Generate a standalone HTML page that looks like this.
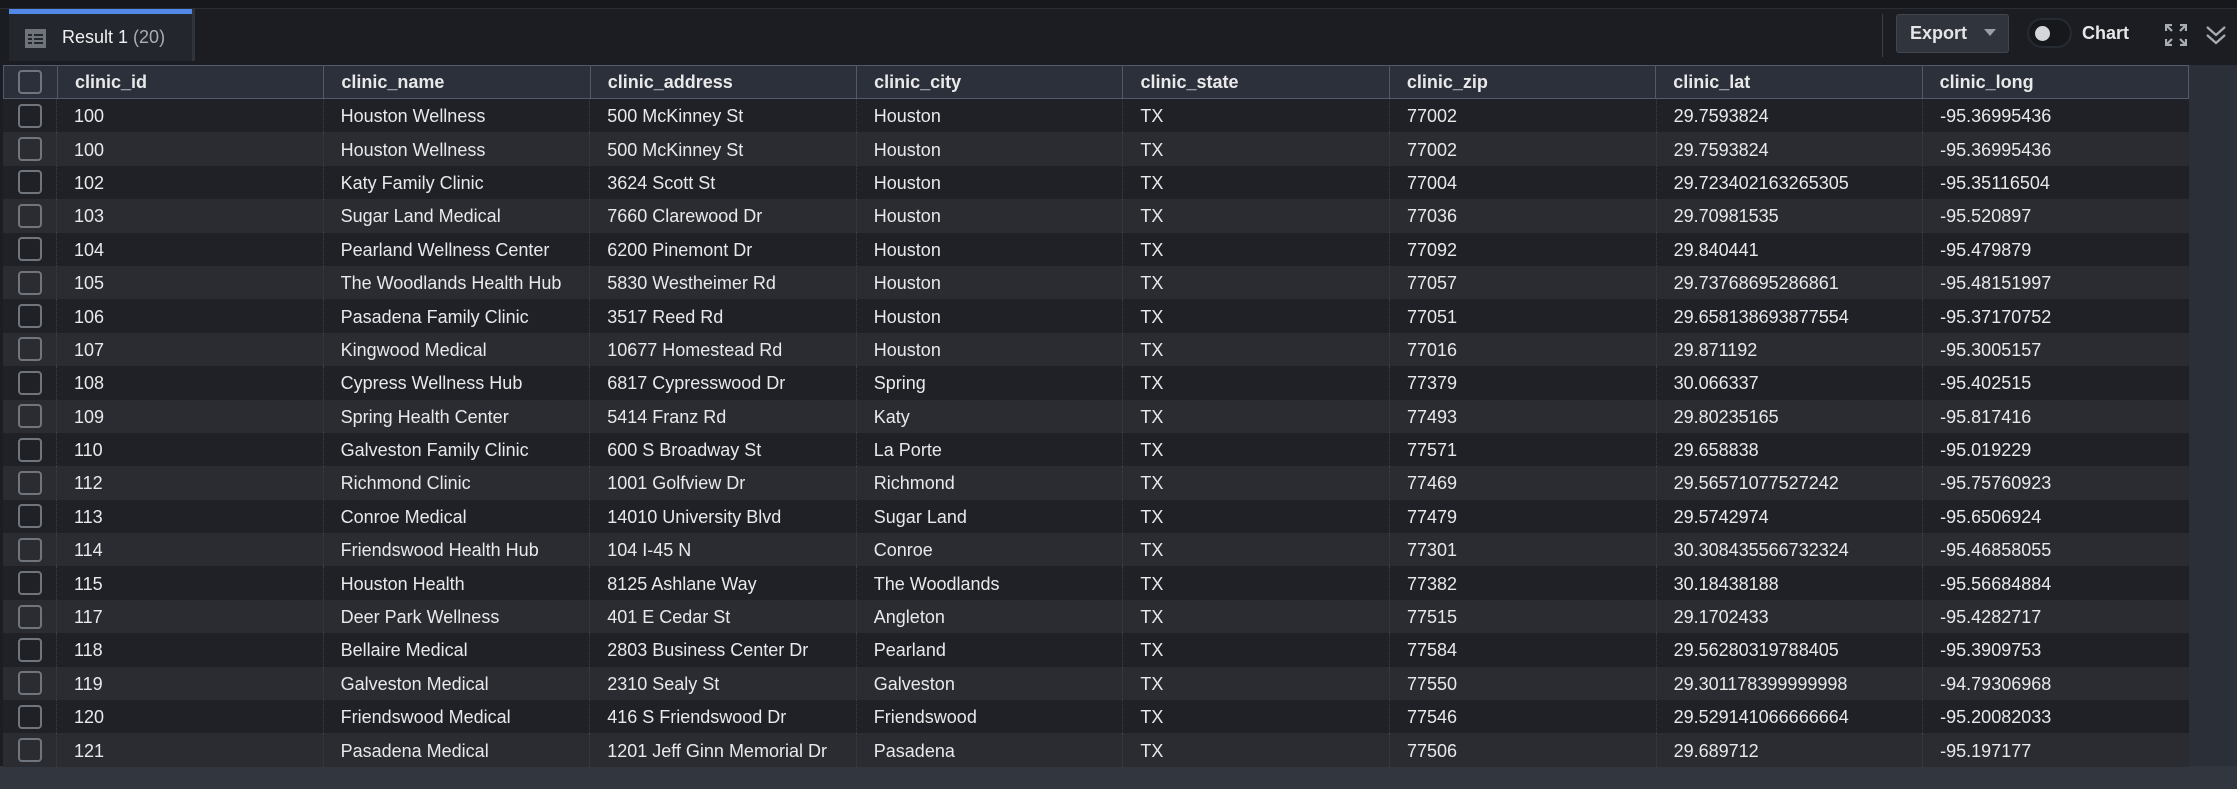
<!DOCTYPE html><html><head><style>
body{margin:0;width:2237px;height:789px;background:#1b1d22;font-family:"Liberation Sans",sans-serif;overflow:hidden;position:relative;color:#e9e9ea}
.top{position:absolute;left:0;top:0;width:2237px;height:8px;background:#16181c;border-bottom:1px solid #2a2d33}
.tab{position:absolute;left:9px;top:9px;width:183px;height:52px;background:#23262d;border-right:3px solid #2f333b}
.tab .bar{height:5px;background:#5288e6}
.tab .t{position:absolute;left:53px;top:18px;font-size:18px;color:#f0f0f0}
.tab .t span{color:#a9adb5}
.grid{position:absolute;left:3px;top:65px;width:2186px}
.hdr{display:flex;height:34px;background:#2b303a;border:1px solid #4f5b6b;box-sizing:border-box}
.row{display:flex;height:33.4px;align-items:center}
.row:nth-child(odd){background:#1f2127}
.row:nth-child(even){background:#2a2c32}
.c{width:266.6px;box-sizing:border-box;padding-left:17px;font-size:18px;height:100%;display:flex;align-items:center;border-left:1px dotted #3b3f47;white-space:nowrap;padding-top:2px}
.hdr .c{border-left:1px solid #4f5b6b;font-weight:bold;font-size:18px;padding-top:0}
.cb{width:53px;display:flex;align-items:center;justify-content:center;height:100%}
.cb i{display:block;width:20px;height:20px;border:2px solid #70757d;border-radius:4px}
.rest{position:absolute;left:2189px;top:65px;width:48px;height:701px;background:#2b2f37}
.bottom{position:absolute;left:0;top:766px;width:2237px;height:23px;background:#31363f}
</style></head><body>
<div class="top"></div>
<div class="tab"><div class="bar"></div>
<svg style="position:absolute;left:16px;top:20px" width="21" height="19" viewBox="0 0 21 19"><rect x="0" y="0" width="21" height="19" fill="#6f737a"/><g fill="#23262d"><rect x="3" y="5" width="4" height="2"/><rect x="9" y="5" width="9" height="2"/><rect x="3" y="9" width="4" height="2"/><rect x="9" y="9" width="9" height="2"/><rect x="3" y="13" width="4" height="2"/><rect x="9" y="13" width="9" height="2"/></g></svg>
<div class="t">Result 1 <span>(20)</span></div></div>
<div style="position:absolute;left:1882px;top:14px;width:1px;height:43px;background:#3a3e45"></div>
<div style="position:absolute;left:1896px;top:14px;width:113px;height:39px;background:#30343c;border:1px solid #41454d;box-sizing:border-box;border-radius:3px;font-size:18px;font-weight:bold;color:#e6e6e6;line-height:37px;padding-left:13px">Export <span style="display:inline-block;margin-left:12px;border:6px solid transparent;border-top:7px solid #9a9ea6;vertical-align:-3px"></span></div>
<div style="position:absolute;left:2027px;top:18px;width:45px;height:30px;border-radius:15px;background:#16181c;border:2px solid #252a33;box-sizing:border-box"><div style="position:absolute;left:6px;top:6px;width:15px;height:15px;border-radius:50%;background:#d4d6da"></div></div>
<div style="position:absolute;left:2082px;top:23px;font-size:18px;font-weight:bold;color:#e6e6e6">Chart</div>
<svg style="position:absolute;left:2165px;top:24px" width="22" height="22" viewBox="0 0 22 22" fill="none" stroke="#a8acb3" stroke-width="2.2"><path d="M1 7V1h6M1 1l6 6M15 1h6v6M21 1l-6 6M1 15v6h6M1 21l6-6M21 15v6h-6M21 21l-6-6"/></svg>
<svg style="position:absolute;left:2205px;top:24px" width="22" height="22" viewBox="0 0 22 22" fill="none" stroke="#a8acb3" stroke-width="2.2"><path d="M2 3l9 8 9-8M2 11l9 8 9-8"/></svg>
<div class="rest"></div>
<div class="bottom"></div>
<div class="grid">
<div class="hdr"><div class="cb"><i></i></div><div class="c">clinic_id</div><div class="c">clinic_name</div><div class="c">clinic_address</div><div class="c">clinic_city</div><div class="c">clinic_state</div><div class="c">clinic_zip</div><div class="c">clinic_lat</div><div class="c">clinic_long</div></div>
<div>
<div class="row"><div class="cb"><i></i></div><div class="c">100</div><div class="c">Houston Wellness</div><div class="c">500 McKinney St</div><div class="c">Houston</div><div class="c">TX</div><div class="c">77002</div><div class="c">29.7593824</div><div class="c">-95.36995436</div></div>
<div class="row"><div class="cb"><i></i></div><div class="c">100</div><div class="c">Houston Wellness</div><div class="c">500 McKinney St</div><div class="c">Houston</div><div class="c">TX</div><div class="c">77002</div><div class="c">29.7593824</div><div class="c">-95.36995436</div></div>
<div class="row"><div class="cb"><i></i></div><div class="c">102</div><div class="c">Katy Family Clinic</div><div class="c">3624 Scott St</div><div class="c">Houston</div><div class="c">TX</div><div class="c">77004</div><div class="c">29.723402163265305</div><div class="c">-95.35116504</div></div>
<div class="row"><div class="cb"><i></i></div><div class="c">103</div><div class="c">Sugar Land Medical</div><div class="c">7660 Clarewood Dr</div><div class="c">Houston</div><div class="c">TX</div><div class="c">77036</div><div class="c">29.70981535</div><div class="c">-95.520897</div></div>
<div class="row"><div class="cb"><i></i></div><div class="c">104</div><div class="c">Pearland Wellness Center</div><div class="c">6200 Pinemont Dr</div><div class="c">Houston</div><div class="c">TX</div><div class="c">77092</div><div class="c">29.840441</div><div class="c">-95.479879</div></div>
<div class="row"><div class="cb"><i></i></div><div class="c">105</div><div class="c">The Woodlands Health Hub</div><div class="c">5830 Westheimer Rd</div><div class="c">Houston</div><div class="c">TX</div><div class="c">77057</div><div class="c">29.73768695286861</div><div class="c">-95.48151997</div></div>
<div class="row"><div class="cb"><i></i></div><div class="c">106</div><div class="c">Pasadena Family Clinic</div><div class="c">3517 Reed Rd</div><div class="c">Houston</div><div class="c">TX</div><div class="c">77051</div><div class="c">29.658138693877554</div><div class="c">-95.37170752</div></div>
<div class="row"><div class="cb"><i></i></div><div class="c">107</div><div class="c">Kingwood Medical</div><div class="c">10677 Homestead Rd</div><div class="c">Houston</div><div class="c">TX</div><div class="c">77016</div><div class="c">29.871192</div><div class="c">-95.3005157</div></div>
<div class="row"><div class="cb"><i></i></div><div class="c">108</div><div class="c">Cypress Wellness Hub</div><div class="c">6817 Cypresswood Dr</div><div class="c">Spring</div><div class="c">TX</div><div class="c">77379</div><div class="c">30.066337</div><div class="c">-95.402515</div></div>
<div class="row"><div class="cb"><i></i></div><div class="c">109</div><div class="c">Spring Health Center</div><div class="c">5414 Franz Rd</div><div class="c">Katy</div><div class="c">TX</div><div class="c">77493</div><div class="c">29.80235165</div><div class="c">-95.817416</div></div>
<div class="row"><div class="cb"><i></i></div><div class="c">110</div><div class="c">Galveston Family Clinic</div><div class="c">600 S Broadway St</div><div class="c">La Porte</div><div class="c">TX</div><div class="c">77571</div><div class="c">29.658838</div><div class="c">-95.019229</div></div>
<div class="row"><div class="cb"><i></i></div><div class="c">112</div><div class="c">Richmond Clinic</div><div class="c">1001 Golfview Dr</div><div class="c">Richmond</div><div class="c">TX</div><div class="c">77469</div><div class="c">29.56571077527242</div><div class="c">-95.75760923</div></div>
<div class="row"><div class="cb"><i></i></div><div class="c">113</div><div class="c">Conroe Medical</div><div class="c">14010 University Blvd</div><div class="c">Sugar Land</div><div class="c">TX</div><div class="c">77479</div><div class="c">29.5742974</div><div class="c">-95.6506924</div></div>
<div class="row"><div class="cb"><i></i></div><div class="c">114</div><div class="c">Friendswood Health Hub</div><div class="c">104 I-45 N</div><div class="c">Conroe</div><div class="c">TX</div><div class="c">77301</div><div class="c">30.308435566732324</div><div class="c">-95.46858055</div></div>
<div class="row"><div class="cb"><i></i></div><div class="c">115</div><div class="c">Houston Health</div><div class="c">8125 Ashlane Way</div><div class="c">The Woodlands</div><div class="c">TX</div><div class="c">77382</div><div class="c">30.18438188</div><div class="c">-95.56684884</div></div>
<div class="row"><div class="cb"><i></i></div><div class="c">117</div><div class="c">Deer Park Wellness</div><div class="c">401 E Cedar St</div><div class="c">Angleton</div><div class="c">TX</div><div class="c">77515</div><div class="c">29.1702433</div><div class="c">-95.4282717</div></div>
<div class="row"><div class="cb"><i></i></div><div class="c">118</div><div class="c">Bellaire Medical</div><div class="c">2803 Business Center Dr</div><div class="c">Pearland</div><div class="c">TX</div><div class="c">77584</div><div class="c">29.56280319788405</div><div class="c">-95.3909753</div></div>
<div class="row"><div class="cb"><i></i></div><div class="c">119</div><div class="c">Galveston Medical</div><div class="c">2310 Sealy St</div><div class="c">Galveston</div><div class="c">TX</div><div class="c">77550</div><div class="c">29.301178399999998</div><div class="c">-94.79306968</div></div>
<div class="row"><div class="cb"><i></i></div><div class="c">120</div><div class="c">Friendswood Medical</div><div class="c">416 S Friendswood Dr</div><div class="c">Friendswood</div><div class="c">TX</div><div class="c">77546</div><div class="c">29.529141066666664</div><div class="c">-95.20082033</div></div>
<div class="row"><div class="cb"><i></i></div><div class="c">121</div><div class="c">Pasadena Medical</div><div class="c">1201 Jeff Ginn Memorial Dr</div><div class="c">Pasadena</div><div class="c">TX</div><div class="c">77506</div><div class="c">29.689712</div><div class="c">-95.197177</div></div>
</div></div>
</body></html>
